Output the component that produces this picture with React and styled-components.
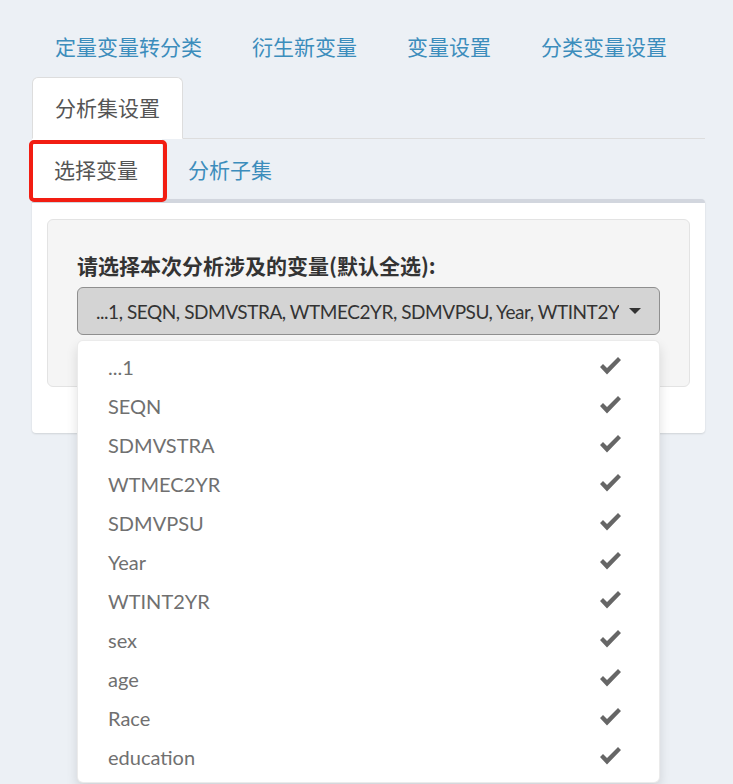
import React from "react";
import styled, { createGlobalStyle } from "styled-components";

const GlobalStyle = createGlobalStyle`
  html, body {
    margin: 0;
    padding: 0;
    height: 784px;
    overflow: hidden;
    background: #ecf0f5;
  }
  body {
    font-family: Lato, "Noto Sans CJK SC", sans-serif;
    color: #333;
  }
`;

const latin = `Lato, "Noto Sans CJK SC", sans-serif`;
const cjk = `"Noto Sans CJK SC", Lato, sans-serif`;

const Page = styled.div`
  padding: 16px 28px 0 32px;
`;

const TopTabs = styled.ul`
  display: flex;
  flex-wrap: wrap;
  margin: 0;
  padding: 0;
  list-style: none;
  border-bottom: 1px solid #ddd;
`;

const TopTab = styled.li`
  margin-right: 4px;
  margin-bottom: -1px;
  padding: 14px 22px 16px;
  font-family: ${cjk};
  font-size: 21px;
  line-height: 30px;
  color: ${p => (p.active ? "#555" : "#3c8dbc")};
  background: ${p => (p.active ? "#fff" : "transparent")};
  border: 1px solid ${p => (p.active ? "#ddd" : "transparent")};
  border-bottom-color: ${p => (p.active ? "#fff" : "transparent")};
  border-radius: 6px 6px 0 0;
`;

const SubTabs = styled.ul`
  display: flex;
  margin: 0;
  padding: 0;
  list-style: none;
  height: 60px;
`;

const SubTab = styled.li`
  position: relative;
  margin-right: 4px;
  padding: 15px 24px 15px 22px;
  font-family: ${cjk};
  font-size: 21px;
  line-height: 30px;
  color: ${p => (p.active ? "#555" : "#3c8dbc")};
  background: ${p => (p.active ? "#fff" : "transparent")};
  ${p =>
    p.marked &&
    `
    &::after {
      content: "";
      position: absolute;
      left: -3px;
      right: -5px;
      top: 1px;
      bottom: -3px;
      border: 4px solid #f21d12;
      border-radius: 5px;
    }
  `}
`;

const Box = styled.div`
  background: #fff;
  border-top: 4px solid #d2d6de;
  border-radius: 4px;
  box-shadow: 0 1px 2px rgba(0, 0, 0, 0.12);
  padding: 16px 15px;
`;

const Well = styled.div`
  background: #f5f5f5;
  border: 1px solid #e3e3e3;
  border-radius: 6px;
  padding: 30px 29px 29px;
  margin-bottom: 30px;
`;

const Label = styled.div`
  font-family: ${cjk};
  font-weight: 700;
  font-size: 21px;
  line-height: 30px;
  color: #333;
  margin-bottom: 7px;
`;

const SelectWrap = styled.div`
  position: relative;
  margin-bottom: 22px;
`;

const SelectButton = styled.div`
  display: flex;
  align-items: center;
  justify-content: space-between;
  height: 46px;
  padding: 0 18px;
  background: #d4d4d4;
  border: 1px solid #8f8f8f;
  border-radius: 6px;
  font-family: ${latin};
  font-size: 19px;
  letter-spacing: -0.45px;
  color: #333;
  white-space: nowrap;
`;

const SelectText = styled.span`
  overflow: hidden;
`;

const Caret = styled.span`
  flex: none;
  width: 0;
  height: 0;
  margin-left: 6px;
  border-left: 6px solid transparent;
  border-right: 6px solid transparent;
  border-top: 6px solid #333;
`;

const Menu = styled.ul`
  position: absolute;
  left: 0;
  right: 0;
  top: 53px;
  margin: 0;
  padding: 6px 0;
  list-style: none;
  background: #fff;
  border: 1px solid rgba(0, 0, 0, 0.08);
  border-radius: 6px;
  box-shadow: 0 6px 12px rgba(0, 0, 0, 0.12);
  z-index: 2;
`;

const Item = styled.li`
  display: flex;
  align-items: center;
  justify-content: space-between;
  height: 39px;
  padding: 0 37px 0 30px;
  font-family: ${latin};
  font-size: 20px;
  color: #707070;
`;

const Check = () => (
  <svg width="22" height="19" viewBox="0 0 22 19">
    <polygon points="0,10 3,7 7,11 18,0 21,3 7,17.5" fill="#666" />
  </svg>
);

const topTabs = ["定量变量转分类", "衍生新变量", "变量设置", "分类变量设置", "分析集设置"];
const vars = [
  "...1",
  "SEQN",
  "SDMVSTRA",
  "WTMEC2YR",
  "SDMVPSU",
  "Year",
  "WTINT2YR",
  "sex",
  "age",
  "Race",
  "education",
];

export default function App() {
  return (
    <>
      <GlobalStyle />
      <Page>
        <TopTabs>
          {topTabs.map(t => (
            <TopTab key={t} active={t === "分析集设置"}>
              {t}
            </TopTab>
          ))}
        </TopTabs>
        <SubTabs>
          <SubTab active marked>选择变量</SubTab>
          <SubTab>分析子集</SubTab>
        </SubTabs>
        <Box>
          <Well>
            <Label>请选择本次分析涉及的变量(默认全选):</Label>
            <SelectWrap>
              <SelectButton>
                <SelectText>...1, SEQN, SDMVSTRA, WTMEC2YR, SDMVPSU, Year, WTINT2Y</SelectText>
                <Caret />
              </SelectButton>
              <Menu>
                {vars.map(v => (
                  <Item key={v}>
                    <span>{v}</span>
                    <Check />
                  </Item>
                ))}
              </Menu>
            </SelectWrap>
          </Well>
        </Box>
      </Page>
    </>
  );
}
